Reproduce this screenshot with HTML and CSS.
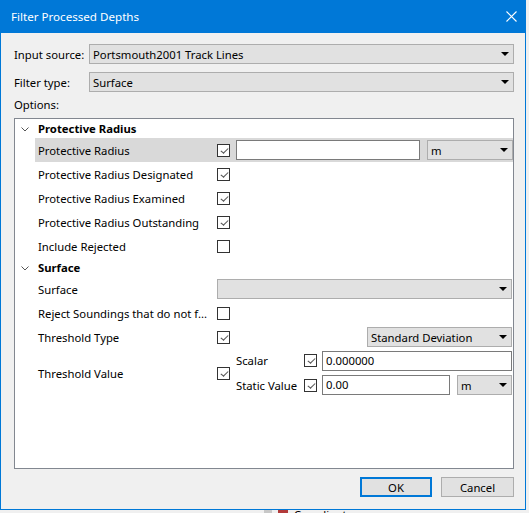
FILE: index.html
```html
<!DOCTYPE html>
<html lang="en">
  <head>
    <meta charset="UTF-8" />
    <title>Filter Processed Depths</title>
    <link rel="stylesheet" href="styles.css">
  </head>
  <body>
    <div class="dialog">
      <div class="titlebar">
        <span class="title">Filter Processed Depths</span>
        <svg class="close-icon" width="11" height="11" viewBox="0 0 11 11">
          <path d="M0.5 0.5 L10.5 10.5 M10.5 0.5 L0.5 10.5" stroke="#fff" stroke-width="1.1" fill="none" />
        </svg>
      </div>

      <div class="dialog-body">
        <div class="field-row">
          <label class="field-label">Input source:</label>
          <div class="combo combo-fill"><span>Portsmouth2001 Track Lines</span><i class="arrow"></i></div>
        </div>
        <div class="field-row">
          <label class="field-label">Filter type:</label>
          <div class="combo combo-fill"><span>Surface</span><i class="arrow"></i></div>
        </div>
        <div class="options-label">Options:</div>

        <div class="tree">
          <div class="tree-group">
            <svg class="chevron" width="8" height="5" viewBox="0 0 8 5"><polyline points="0.5,0.5 4,4 7.5,0.5" stroke="#555" fill="none" /></svg>
            <span>Protective Radius</span>
          </div>
          <div class="prop selected">
            <span class="prop-name">Protective Radius</span>
            <div class="prop-value">
              <span class="check on"></span>
              <div class="edit edit-radius"></div>
              <div class="combo combo-unit"><span>m</span><i class="arrow"></i></div>
            </div>
          </div>
          <div class="prop">
            <span class="prop-name">Protective Radius Designated</span>
            <div class="prop-value"><span class="check on"></span></div>
          </div>
          <div class="prop">
            <span class="prop-name">Protective Radius Examined</span>
            <div class="prop-value"><span class="check on"></span></div>
          </div>
          <div class="prop">
            <span class="prop-name">Protective Radius Outstanding</span>
            <div class="prop-value"><span class="check on"></span></div>
          </div>
          <div class="prop">
            <span class="prop-name">Include Rejected</span>
            <div class="prop-value"><span class="check"></span></div>
          </div>

          <div class="tree-group">
            <svg class="chevron" width="8" height="5" viewBox="0 0 8 5"><polyline points="0.5,0.5 4,4 7.5,0.5" stroke="#555" fill="none" /></svg>
            <span>Surface</span>
          </div>
          <div class="prop">
            <span class="prop-name">Surface</span>
            <div class="prop-value"><div class="combo combo-fill"><span></span><i class="arrow"></i></div></div>
          </div>
          <div class="prop">
            <span class="prop-name">Reject Soundings that do not f...</span>
            <div class="prop-value"><span class="check"></span></div>
          </div>
          <div class="prop">
            <span class="prop-name">Threshold Type</span>
            <div class="prop-value">
              <span class="check on"></span>
              <div class="combo combo-type"><span>Standard Deviation</span><i class="arrow"></i></div>
            </div>
          </div>
          <div class="prop prop-tall">
            <span class="prop-name">Threshold Value</span>
            <div class="prop-value">
              <span class="check on"></span>
              <div class="sub-grid">
                <span class="sub-label">Scalar</span>
                <span class="check on"></span>
                <div class="edit edit-scalar">0.000000</div>

                <span class="sub-label">Static Value</span>
                <span class="check on"></span>
                <div class="static-cell">
                  <div class="edit edit-static">0.00</div>
                  <div class="combo combo-unit-sm"><span>m</span><i class="arrow"></i></div>
                </div>
              </div>
            </div>
          </div>
        </div>

        <div class="buttons">
          <button class="btn btn-default">OK</button>
          <button class="btn">Cancel</button>
        </div>
      </div>
    </div>

    <div class="behind-bar">
      <span class="behind-icon grey"></span>
      <span class="behind-icon red"></span>
      <span class="behind-text">Coordinates</span>
    </div>
  </body>
</html>
```

FILE: styles.css
```css
body {
  margin: 0;
  padding: 0;
  width: 529px;
  height: 513px;
  overflow: hidden;
  background: #f0f0f0;
  font-family: "Segoe UI", "Noto Sans", sans-serif;
  font-size: 11.3px;
  color: #000;
}

.dialog {
  width: 526px;
  height: 510px;
  box-sizing: border-box;
  border: 1px solid #0078d7;
  border-top: none;
  background: #f0f0f0;
  display: flex;
  flex-direction: column;
}

.titlebar {
  height: 33px;
  flex-shrink: 0;
  background: #0078d7;
  color: #fff;
  display: flex;
  align-items: center;
  justify-content: space-between;
  padding: 0 9px 0 11px;
  margin: 0 -1px;
}

.title {
  font-size: 11.6px;
  padding-bottom: 1px;
}

.dialog-body {
  padding: 11px 11px 0 13px;
  display: flex;
  flex-direction: column;
}

.field-row {
  display: flex;
  align-items: center;
  height: 20px;
  margin-bottom: 8px;
}

.field-label {
  width: 75px;
  flex-shrink: 0;
}

/* combo boxes */
.combo {
  height: 20px;
  box-sizing: border-box;
  background: #e1e1e1;
  border: 1px solid #adadad;
  display: flex;
  align-items: center;
  justify-content: space-between;
  padding: 0 4px 0 3px;
}

.combo-fill {
  flex: 1;
}

.arrow {
  width: 0;
  height: 0;
  border-left: 4px solid transparent;
  border-right: 4px solid transparent;
  border-top: 4px solid #000;
}

.options-label {
  line-height: 16px;
  margin-top: -3px;
  margin-bottom: 5px;
}

/* property tree */
.tree {
  height: 351px;
  box-sizing: border-box;
  border: 1px solid #828790;
  background: #fff;
}

.tree-group {
  height: 19px;
  display: flex;
  align-items: center;
  padding-left: 6px;
  gap: 9px;
  font-weight: bold;
}

.chevron {
  margin-top: 1px;
}

.prop {
  margin-left: 20px;
  height: 24px;
  display: grid;
  grid-template-columns: 178px 1fr;
  align-items: center;
}

.prop.selected {
  background: #d9d9d9;
}

.prop-tall {
  height: 48px;
}

.prop-name {
  padding-left: 3px;
  white-space: nowrap;
  overflow: hidden;
}

.prop-value {
  padding: 0 1px 0 4px;
  display: flex;
  align-items: center;
  gap: 6px;
}

.check {
  width: 13px;
  height: 13px;
  box-sizing: border-box;
  border: 1px solid #333;
  background: #fff;
  flex-shrink: 0;
  position: relative;
}

.check.on::after {
  content: "";
  position: absolute;
  left: 2px;
  top: 1px;
  width: 6px;
  height: 3px;
  border-left: 1px solid #555;
  border-bottom: 1px solid #555;
  transform: translate(1px, 2px) rotate(-45deg) skewX(6deg);
}

.edit {
  height: 20px;
  box-sizing: border-box;
  border: 1px solid #7a7a7a;
  background: #fff;
  padding-left: 3px;
  line-height: 18px;
}

.edit-radius {
  width: 184px;
}

.combo-unit {
  width: 86px;
  margin-left: 1px;
}

.combo-type {
  width: 145px;
  margin-left: auto;
}

.sub-grid {
  flex: 1;
  display: grid;
  grid-template-columns: 63px 13px 1fr;
  grid-template-rows: 21px 20px;
  row-gap: 4px;
  column-gap: 5px;
  align-items: center;
  margin-top: -1px;
}

.sub-label {
  white-space: nowrap;
}

.static-cell {
  display: flex;
  gap: 7px;
}

.edit-static {
  width: 128px;
}

.combo-unit-sm {
  flex: 1;
}

/* buttons */
.buttons {
  display: flex;
  justify-content: flex-end;
  gap: 9px;
  margin-top: 8px;
}

.btn {
  height: 20px;
  box-sizing: border-box;
  background: #e1e1e1;
  border: 1px solid #adadad;
  font-family: inherit;
  font-size: 11.3px;
  padding: 0;
  width: 73px;
  color: #000;
}

.btn-default {
  width: 72px;
  border: 2px solid #0078d7;
}

/* application behind the dialog */
.behind-bar {
  height: 3px;
  display: flex;
  align-items: flex-start;
  padding-left: 264px;
  gap: 6px;
  overflow: hidden;
}

.behind-icon {
  width: 8px;
  height: 8px;
}

.behind-icon.grey {
  background: #c8c8c8;
}

.behind-icon.red {
  background: #b23a3a;
  width: 10px;
}

.behind-text {
  line-height: 8px;
  margin-top: 1px;
}
```
